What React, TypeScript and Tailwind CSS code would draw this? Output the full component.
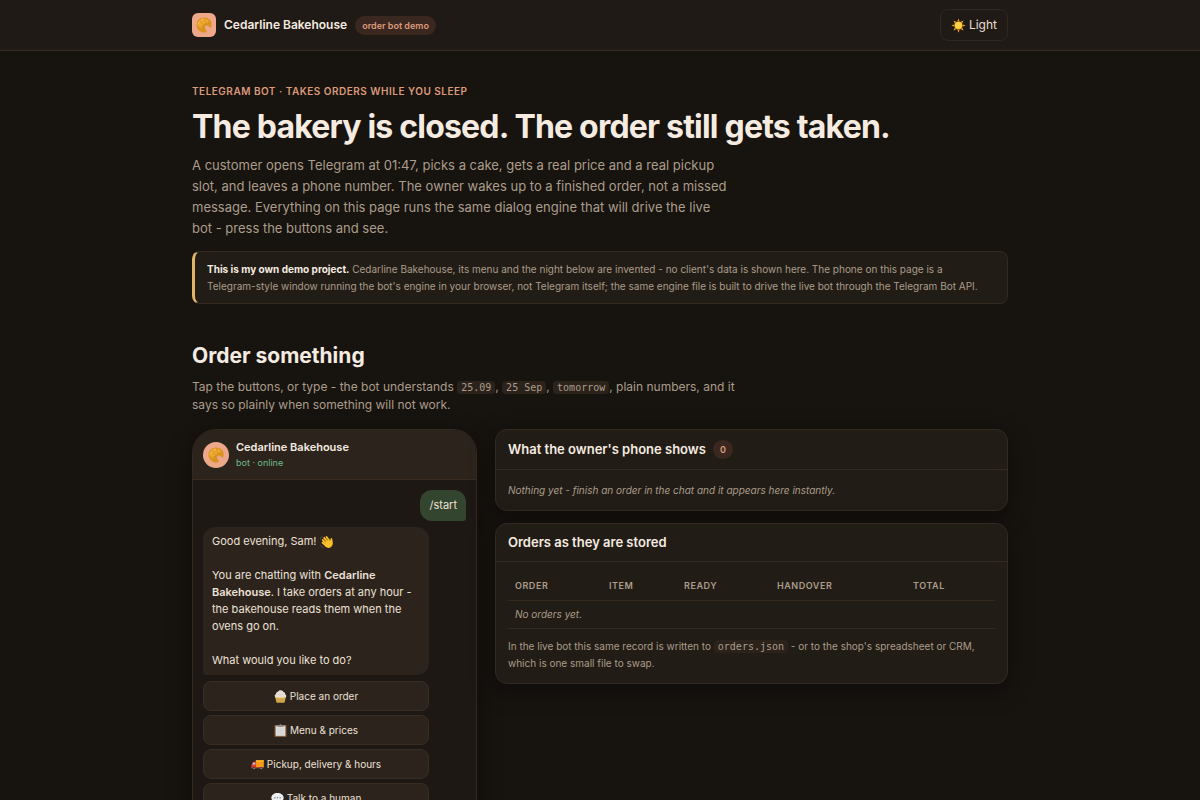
import { ReactNode, useState } from "react";

type IconProps = { className?: string };

function Croissant({ className }: IconProps) {
  return (
    <svg viewBox="0 0 32 32" className={className} aria-hidden="true">
      <path
        d="M18.500 31C9 32 1 25 1 15.500C1 7 8 1 16.500 1C25 1 31.500 7 31.500 14.500C31.500 18 30.500 21 28.500 21C26.500 21 26 17.500 22.500 17C19 16.500 17 19 18 22C19 25 22 26.500 21.500 29C21.200 30.500 20 31 18.500 31Z"
        fill="#dd9320"
      />
      <path d="M3 15C3 8 9 3.500 16 3.500C22 3.500 26 6 28 10C24 12 20 12 17 14C13 17 13 20 10 23C6 22 3 19 3 15Z" fill="#eba92f" />
      <path d="M7.500 8.500C11 10.500 13.500 13 15 16.500M16.500 4C18.500 7.500 19.500 11 19.500 15M26 7C25.500 10.500 24.500 13 23.500 15.500M5 20.500C9 20.500 12.500 20 16 19M11 28C13 26.500 15.500 25 18 24" fill="none" stroke="#cc851a" strokeWidth="1" />
      <path d="M11 6C12.500 5 13.700 4.600 15 4.500M4.500 13C5 11.300 5.700 10.300 7 9.500" fill="none" stroke="#fbd06c" strokeWidth="1.300" strokeLinecap="round" />
    </svg>
  );
}

function Sun({ className }: IconProps) {
  return (
    <svg viewBox="0 0 32 32" className={className} aria-hidden="true">
      <path
        d="M16 .8l2.200 6h-4.400zM16 31.200l2.200-6h-4.400zM.8 16l6-2.200v4.400zM31.200 16l-6-2.200v4.400zM5.300 5.300l5.700 2.600-3.100 3.100zM26.700 5.300l-5.700 2.600 3.100 3.100zM5.300 26.700l5.700-2.600-3.100-3.100zM26.700 26.700l-5.700-2.600 3.100-3.100z"
        fill="#f6a91c"
      />
      <circle cx="16" cy="16" r="8.600" fill="#fbb829" />
      <circle cx="16" cy="15.200" r="6.800" fill="#ffd447" />
    </svg>
  );
}

function Wave({ className }: IconProps) {
  return (
    <svg viewBox="0 0 32 32" className={className} aria-hidden="true">
      <g stroke="#fcc22d" strokeWidth="4.200" strokeLinecap="round">
        <path d="M6.500 11.500l9 10M9.500 6.500l10 11.500M15 4.500l8.500 11.500M5.800 17.500l8 7.500" />
      </g>
      <path d="M11 16l11-5 2 2.500c.3-2.500-.7-5 .8-6.200 1.300-1 3 .2 3.200 2.200.4 3.200 1.800 6.500 1.200 10.500-.8 5.500-4.500 9.500-9 9.500-4 0-7-2.500-9.200-5.500z" fill="#fcc22d" />
      <path d="M9 11.500l6 7M13 8l6 7M17.500 6.500l5 7M8 16.500l5 5" stroke="#d88c12" strokeWidth=".9" fill="none" />
      <path d="M28.500 17c0 6-3.500 10.500-8.500 11.500" stroke="#e39a18" strokeWidth="1.300" fill="none" />
      <path d="M1.500 9c-.3-2.500 1-5.200 3.500-6.200M2 24c.8 2.700 3 4.700 5.500 5.200" stroke="#6d6459" strokeWidth="1.500" fill="none" strokeLinecap="round" />
    </svg>
  );
}

function Cupcake({ className }: IconProps) {
  return (
    <svg viewBox="0 0 32 32" className={className} aria-hidden="true">
      <path d="M2.500 15h27L26.500 29c-.3 1.600-1.700 2.500-3.500 2.500H9c-1.800 0-3.200-.9-3.500-2.500z" fill="#d3a94a" />
      <path d="M10 19l1 11M16 19v11M22 19l-1 11" stroke="#bf9540" strokeWidth="1" />
      <path d="M2.500 17C1 13.500 2.500 11 5 10 4.500 7 7 4.800 9.500 4.500 10.500 2 13.500.5 16.500.5c3.500 0 6 1.800 6.500 4.300 3 .2 5 2.700 4.500 5.500 2.500 1.200 3.500 4 2 6.700-3 2.500-24 2.500-27 0z" fill="#e9dfd6" />
      <path d="M8 10.500c5 1.500 11 1.200 16-.8" stroke="#d3c3b5" strokeWidth="1" fill="none" />
      <path d="M3 18c5 2.200 21 2.200 26 0" stroke="#e6c679" strokeWidth="2" fill="none" />
    </svg>
  );
}

function Clipboard({ className }: IconProps) {
  return (
    <svg viewBox="0 0 32 32" className={className} aria-hidden="true">
      <rect x="1.500" y="2.500" width="29" height="29" rx="1.500" fill="#9c7049" />
      <rect x="4.500" y="5.500" width="23" height="23.500" fill="#dddee1" />
      <path d="M8 12h16M8 16h16M8 20h16M8 24h16" stroke="#c3c5ca" strokeWidth="1.200" />
      <path d="M9 7.500V4.500c0-.8.600-1.200 1.300-1.200h3C13.500 1.500 14.500.5 16 .5s2.500 1 2.700 2.800h3c.7 0 1.300.4 1.300 1.200v3z" fill="#8b8e94" />
    </svg>
  );
}

function Truck({ className }: IconProps) {
  return (
    <svg viewBox="0 0 32 32" className={className} aria-hidden="true">
      <path d="M12 5.500h18.500c.6 0 1 .4 1 1V22H12z" fill="#f79a16" />
      <path d="M12 5.500h18.500c.6 0 1 .4 1 1V9H12z" fill="#ffb52e" />
      <path d="M1 17.500L4.500 10c.3-.7.800-1 1.500-1h6.500v16H2c-.6 0-1-.4-1-1z" fill="#e5352b" />
      <path d="M3.500 16l2.300-5h4.700v5.500z" fill="#8fd0ea" />
      <path d="M1 22h30.500v2.500c0 .6-.4 1-1 1H2c-.6 0-1-.4-1-1z" fill="#a8453a" />
      <circle cx="7.500" cy="25.500" r="3.500" fill="#3b3b40" />
      <circle cx="25" cy="25.500" r="3.500" fill="#3b3b40" />
      <circle cx="7.500" cy="25.500" r="1.500" fill="#b8b8be" />
      <circle cx="25" cy="25.500" r="1.500" fill="#b8b8be" />
    </svg>
  );
}

function Speech({ className }: IconProps) {
  return (
    <svg viewBox="0 0 32 32" className={className} aria-hidden="true">
      <path d="M16 2.500C7.400 2.500.8 7.700.8 14.300c0 4 2.400 7.400 6.200 9.500.2 2-.8 4-2.300 5.400 3.200.2 6-1 8.200-3.300 1 .2 2 .2 3.100.2 8.600 0 15.200-5.200 15.200-11.800S24.600 2.500 16 2.500z" fill="#eceef0" />
      <circle cx="9.500" cy="14.300" r="1.700" fill="#777a80" />
      <circle cx="16" cy="14.300" r="1.700" fill="#777a80" />
      <circle cx="22.500" cy="14.300" r="1.700" fill="#777a80" />
    </svg>
  );
}

const replies = [
  { label: "Place an order", icon: Cupcake },
  { label: "Menu & prices", icon: Clipboard },
  { label: "Pickup, delivery & hours", icon: Truck },
  { label: "Talk to a human", icon: Speech },
];

function Code({ children }: { children: ReactNode }) {
  return (
    <code className="rounded-sm bg-[#2c221c] px-1 py-px font-['DejaVu_Sans_Mono',monospace] text-[10px] leading-none">
      {children}
    </code>
  );
}

function Header() {
  const [theme, setTheme] = useState("Light");

  return (
    <header className="border-b border-[#3a2c20] bg-[#1f1a15]">
      <div className="mx-auto flex h-[50px] max-w-[848px] items-center px-4">
        <span className="mr-2 flex size-6 items-center justify-center rounded-md bg-[#eda88a]">
          <Croissant className="size-4" />
        </span>
        <span className="text-[12px] font-semibold">Cedarline Bakehouse</span>
        <span className="ml-2 rounded-full bg-[#3a2820] px-[7px] py-[3px] text-[9px] leading-[13px] font-semibold text-[#dc9a7b]">
          order bot demo
        </span>
        <button
          type="button"
          onClick={() => setTheme(theme === "Light" ? "Dark" : "Light")}
          className="ml-auto flex h-8 items-center gap-[3px] rounded-lg border border-[#2f2821] px-[10px] text-[12px] text-[#e9dfd3]"
        >
          <Sun className="size-[15px]" />
          {theme}
        </button>
      </div>
    </header>
  );
}

function Hero() {
  return (
    <section>
      <p className="text-[10px] leading-4 font-semibold tracking-wider text-[#dc9a7b] uppercase">
        Telegram bot · takes orders while you sleep
      </p>
      <h1 className="mt-2 text-[32px] leading-10 font-bold tracking-tight">
        The bakery is closed. The order still gets taken.
      </h1>
      <p className="mt-2 max-w-[538px] text-[13px] leading-[21px] text-[#ab9d8b]">
        A customer opens Telegram at 01:47, picks a cake, gets a real price and a real pickup slot, and leaves a phone
        number. The owner wakes up to a finished order, not a missed message. Everything on this page runs the same
        dialog engine that will drive the live bot - press the buttons and see.
      </p>
      <p className="mt-3 rounded-lg border border-l-3 border-[#33291f] border-l-[#e0b566] bg-[#211c16] px-3 pt-[9px] pb-2 text-[10px] leading-[17px] text-[#ab9d8b]">
        <strong className="font-bold text-[#f5ebe0]">This is my own demo project.</strong> Cedarline Bakehouse, its menu
        and the night below are invented - no client's data is shown here. The phone on this page is a{" "}
        <span className="whitespace-nowrap">Telegram-style</span> window running the bot's engine in your browser, not
        Telegram itself; the same engine file is built to drive the live bot through the Telegram Bot API.
      </p>
    </section>
  );
}

function Phone() {
  return (
    <section className="overflow-hidden rounded-3xl border border-[#33291f] bg-[#1d1813] shadow-[0_6px_24px_rgba(0,0,0,0.4)]">
      <div className="flex h-[50px] items-center gap-[7px] border-b border-[#3a2c20] bg-[#2c231d] px-[10px]">
        <span className="flex size-[26px] items-center justify-center rounded-full bg-[#eda88a]">
          <Croissant className="size-4" />
        </span>
        <div>
          <div className="text-[11px] leading-4 font-semibold">Cedarline Bakehouse</div>
          <div className="text-[9px] leading-4 text-[#6fbb8b]">bot · online</div>
        </div>
      </div>
      <div className="flex flex-col items-start gap-[6px] px-[10px] pt-[10px] pb-16 text-[#ece1d5]">
        <div className="self-end rounded-xl rounded-br-[3px] bg-[#33452f] px-[9px] py-[7px] text-[11px] leading-[17px]">
          /start
        </div>
        <div className="w-[226px] rounded-xl rounded-bl-[3px] bg-[#2c231d] px-[9px] py-[6px] text-[11px] leading-[17px]">
          <p className="flex items-center gap-[3px]">
            Good evening, Sam! <Wave className="size-[14px]" />
          </p>
          <p className="mt-[17px]">
            You are chatting with <b className="font-semibold">Cedarline Bakehouse</b>. I take orders at any hour - the
            bakehouse reads them when the ovens go on.
          </p>
          <p className="mt-[17px]">What would you like to do?</p>
        </div>
        <div className="flex w-[226px] flex-col gap-1">
          {replies.map(({ label, icon: Icon }) => (
            <button
              key={label}
              type="button"
              className="flex h-[30px] items-center justify-center gap-[3px] rounded-lg border border-[#382d24] bg-[#2c231d] text-[10px]"
            >
              <Icon className="size-[13px]" />
              {label}
            </button>
          ))}
        </div>
      </div>
    </section>
  );
}

function Card({ title, badge, children }: { title: string; badge?: number; children: ReactNode }) {
  return (
    <section className="rounded-xl border border-[#33291f] bg-[#211c16] shadow-[0_6px_24px_rgba(0,0,0,0.4)]">
      <div className="flex items-center gap-[7px] border-b border-[#33291f] px-3 py-[10px]">
        <h3 className="text-[13px] leading-[17px] font-semibold">{title}</h3>
        {badge !== undefined && (
          <span className="rounded-full bg-[#3a2820] px-[7px] py-[3px] text-[9px] leading-[13px] font-semibold text-[#dc9a7b]">
            {badge}
          </span>
        )}
      </div>
      {children}
    </section>
  );
}

function Orders() {
  return (
    <div className="px-3 pt-[9px] pb-[11px] text-[10px] text-[#ab9d8b]">
      <table className="w-full text-left">
        <thead>
          <tr className="h-[29px] border-b border-[#33291f] text-[9px] tracking-[0.06em] uppercase">
            <th className="w-[94px] px-[7px] font-semibold">Order</th>
            <th className="w-[75px] px-[7px] font-semibold">Item</th>
            <th className="w-[93px] px-[7px] font-semibold">Ready</th>
            <th className="w-[136px] px-[7px] font-semibold">Handover</th>
            <th className="px-[7px] font-semibold">Total</th>
          </tr>
        </thead>
        <tbody>
          <tr className="h-7 border-b border-[#33291f]">
            <td colSpan={5} className="px-[7px] italic">
              No orders yet.
            </td>
          </tr>
        </tbody>
      </table>
      <p className="mt-[9px] leading-[17px]">
        In the live bot this same record is written to <Code>orders.json</Code> - or to the shop's spreadsheet or CRM,
        which is one small file to swap.
      </p>
    </div>
  );
}

export default function App() {
  return (
    <div className="min-h-screen bg-[#17130f] font-[Inter,sans-serif] text-[#f5ebe0]">
      <Header />
      <main className="mx-auto max-w-[848px] px-4 pt-8 pb-12">
        <Hero />
        <h2 className="mt-9 text-[21px] leading-8 font-bold">Order something</h2>
        <p className="mt-[6px] max-w-[544px] text-[12px] leading-[18px] text-[#ab9d8b]">
          Tap the buttons, or type - the bot understands <Code>25.09</Code>, <Code>25 Sep</Code>, <Code>tomorrow</Code>,
          plain numbers, and it says so plainly when something will not work.
        </p>
        <div className="mt-[15px] grid grid-cols-[285px_1fr] items-start gap-[18px]">
          <Phone />
          <div className="flex flex-col gap-3">
            <Card title="What the owner's phone shows" badge={0}>
              <p className="px-3 pt-3 pb-[11px] text-[10px] leading-[17px] text-[#ab9d8b] italic">
                Nothing yet - finish an order in the chat and it appears here instantly.
              </p>
            </Card>
            <Card title="Orders as they are stored">
              <Orders />
            </Card>
          </div>
        </div>
      </main>
    </div>
  );
}
